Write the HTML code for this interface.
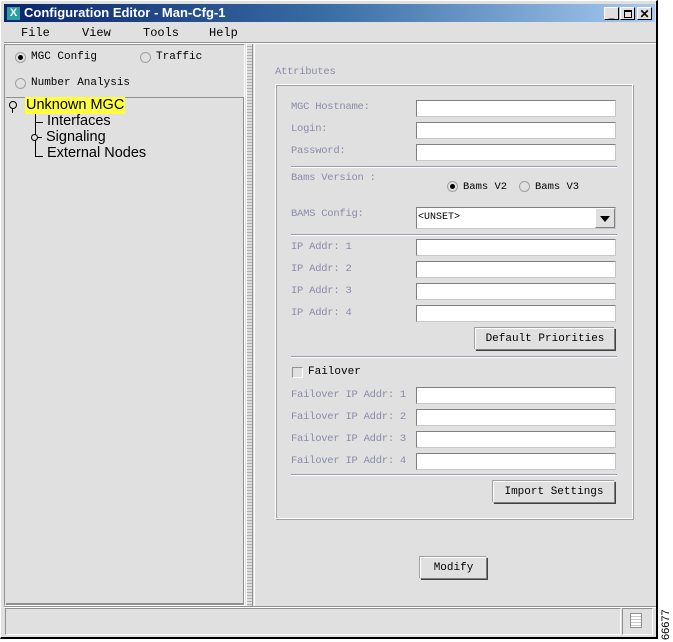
<!DOCTYPE html>
<html><head><style>
*{margin:0;padding:0;box-sizing:border-box}
body{width:673px;height:642px;background:#fff;position:relative;overflow:hidden;font-family:"Liberation Mono",monospace;font-size:10px}
.a{position:absolute}
.win{left:0;top:0;width:658px;height:639px;background:#e0e0e0;border-right:2px solid #000;border-bottom:2px solid #000;border-left:1px solid #fff;border-top:1px solid #fff}
.title{left:4px;top:4px;width:651px;height:18px;background:linear-gradient(90deg,#0a246a,#3a6ea5 50%,#a6caf0)}
.lbl{color:#8a8ca8;font-size:10.5px;white-space:nowrap;letter-spacing:-0.25px}
.inp{background:#fff;border-top:1px solid #808080;border-left:1px solid #808080;border-right:1px solid #c8c8c8;border-bottom:1px solid #c8c8c8;height:17px;width:200px;left:416px}
.sep{height:2px;border-top:1px solid #9a9ab0;border-bottom:1px solid #fff;left:291px;width:326px}
.btn{background:#e0e0e0;border-top:1px solid #fff;border-left:1px solid #fff;border-right:1px solid #808080;border-bottom:1px solid #808080;box-shadow:1px 1px 0 #404040,-1px -1px 0 #a0a0a0;text-align:center;color:#000;font-size:11px}
.rad{width:11px;height:11px;border-radius:50%;border:1px solid #a0a0a0;background:#e0e0e0}
.rad.on::after{content:"";position:absolute;left:2px;top:2px;width:5px;height:5px;border-radius:50%;background:#000}
.tree{font-family:"Liberation Sans","DejaVu Sans",sans-serif;font-size:14.5px;color:#000}
</style></head><body>
<div class="a win"></div>
<div class="a title"></div>
<div class="a" style="left:7px;top:7px;width:13px;height:13px;background:#2aa0a0;color:#fff;font:bold 11px 'Liberation Sans',sans-serif;text-align:center;line-height:13px">X</div>
<div class="a" style="left:24px;top:5px;color:#fff;font:bold 13px 'Liberation Sans',sans-serif">Configuration Editor - Man-Cfg-1</div>
<div class="a btn" style="left:604px;top:7px;width:15px;height:13px;font:bold 10px sans-serif;line-height:13px;box-shadow:none;border-right-color:#000;border-bottom-color:#000">_</div>
<div class="a btn" style="left:620px;top:7px;width:15px;height:13px;box-shadow:none;border-right-color:#000;border-bottom-color:#000"><div class="a" style="left:3px;top:2px;width:8px;height:8px;border:1px solid #000;border-top-width:2px"></div></div>
<div class="a btn" style="left:637px;top:7px;width:15px;height:13px;font:bold 12px sans-serif;line-height:12px;box-shadow:none;border-right-color:#000;border-bottom-color:#000">✕</div>
<div class="a" style="top:26px;left:21px;font-size:12px">File</div>
<div class="a" style="top:26px;left:82px;font-size:12px">View</div>
<div class="a" style="top:26px;left:143px;font-size:12px">Tools</div>
<div class="a" style="top:26px;left:209px;font-size:12px">Help</div>
<div class="a" style="left:4px;top:42px;width:652px;height:2px;border-top:1px solid #909090;border-bottom:1px solid #fff"></div>
<div class="a" style="left:4px;top:44px;width:241px;height:562px;border:1px solid #909090;border-right-color:#fff;border-bottom-color:#fff"></div>
<div class="a rad on" style="left:15px;top:52px"></div><div class="a" style="left:31px;top:51px;font-size:11px">MGC Config</div>
<div class="a rad" style="left:140px;top:52px"></div><div class="a" style="left:156px;top:51px;font-size:11px">Traffic</div>
<div class="a rad" style="left:15px;top:78px"></div><div class="a" style="left:31px;top:77px;font-size:11px">Number Analysis</div>
<div class="a" style="left:6px;top:97px;width:238px;height:508px;border-top:1px solid #909090;border-bottom:2px solid #909090;border-right:1px solid #909090"></div>
<div class="a" style="left:9px;top:101px;width:8px;height:8px;border:1px solid #000;border-radius:50%"></div>
<div class="a" style="left:12px;top:109px;width:1px;height:4px;background:#000"></div>
<div class="a tree" style="left:25px;top:97px;background:#ffff40;line-height:17px;padding:0 1px">Unknown MGC</div>
<div class="a" style="left:35px;top:114px;width:1px;height:43px;background:#000"></div>
<div class="a" style="left:35px;top:122px;width:8px;height:1px;background:#000"></div>
<div class="a" style="left:35px;top:156px;width:8px;height:1px;background:#000"></div>
<div class="a" style="left:31px;top:134px;width:7px;height:7px;border:1px solid #000;border-radius:50%;background:#e0e0e0"></div>
<div class="a" style="left:38px;top:137px;width:4px;height:1px;background:#000"></div>
<div class="a tree" style="left:47px;top:113px">Interfaces</div>
<div class="a tree" style="left:46px;top:129px">Signaling</div>
<div class="a tree" style="left:47px;top:145px">External Nodes</div>
<div class="a" style="left:246px;top:44px;width:7px;height:562px;background:repeating-linear-gradient(#e0e0e0 0 2px,#b0b0b0 2px 3px);border-left:1px solid #fff;border-right:1px solid #909090"></div>
<div class="a" style="left:254px;top:44px;width:402px;height:562px;border-left:1px solid #fff"></div>
<div class="a lbl" style="left:275px;top:66px">Attributes</div>
<div class="a" style="left:275px;top:84px;width:358px;height:435px;border:1px solid #fff;box-shadow:inset 1px 1px 0 #a0a0a0,1px 1px 0 #a0a0a0"></div>
<div class="a lbl" style="left:291px;top:101px">MGC Hostname:</div><div class="a inp" style="top:100px"></div>
<div class="a lbl" style="left:291px;top:123px">Login:</div><div class="a inp" style="top:122px"></div>
<div class="a lbl" style="left:291px;top:145px">Password:</div><div class="a inp" style="top:144px"></div>
<div class="a sep" style="top:166px"></div>
<div class="a lbl" style="left:291px;top:172px">Bams Version :</div>
<div class="a rad on" style="left:447px;top:181px"></div><div class="a" style="left:463px;top:181px;font-size:10.5px">Bams V2</div>
<div class="a rad" style="left:519px;top:181px"></div><div class="a" style="left:535px;top:181px;font-size:10.5px">Bams V3</div>
<div class="a lbl" style="left:291px;top:208px">BAMS Config:</div>
<div class="a inp" style="top:207px;height:22px;padding:4px 1px;color:#000">&lt;UNSET&gt;</div>
<div class="a btn" style="left:595px;top:208px;width:20px;height:20px;box-shadow:none"><div class="a" style="left:4px;top:7px;border-left:5px solid transparent;border-right:5px solid transparent;border-top:6px solid #000"></div></div>
<div class="a sep" style="top:234px"></div>
<div class="a lbl" style="left:291px;top:241px">IP Addr: 1</div><div class="a inp" style="top:239px"></div>
<div class="a lbl" style="left:291px;top:263px">IP Addr: 2</div><div class="a inp" style="top:261px"></div>
<div class="a lbl" style="left:291px;top:285px">IP Addr: 3</div><div class="a inp" style="top:283px"></div>
<div class="a lbl" style="left:291px;top:307px">IP Addr: 4</div><div class="a inp" style="top:305px"></div>
<div class="a btn" style="left:475px;top:328px;width:140px;height:22px;line-height:20px">Default Priorities</div>
<div class="a sep" style="top:356px"></div>
<div class="a" style="left:292px;top:367px;width:11px;height:11px;border:1px solid #909090;border-right-color:#fff;border-bottom-color:#fff"></div>
<div class="a" style="left:308px;top:366px;font-size:11px">Failover</div>
<div class="a lbl" style="left:291px;top:389px">Failover IP Addr: 1</div><div class="a inp" style="top:387px"></div>
<div class="a lbl" style="left:291px;top:411px">Failover IP Addr: 2</div><div class="a inp" style="top:409px"></div>
<div class="a lbl" style="left:291px;top:433px">Failover IP Addr: 3</div><div class="a inp" style="top:431px"></div>
<div class="a lbl" style="left:291px;top:455px">Failover IP Addr: 4</div><div class="a inp" style="top:453px"></div>
<div class="a sep" style="top:474px"></div>
<div class="a btn" style="left:493px;top:481px;width:122px;height:22px;line-height:20px">Import Settings</div>
<div class="a btn" style="left:420px;top:557px;width:67px;height:22px;line-height:20px">Modify</div>
<div class="a" style="left:4px;top:606px;width:652px;height:2px;border-top:1px solid #909090;border-bottom:1px solid #fff"></div>
<div class="a" style="left:5px;top:608px;width:616px;height:27px;border:1px solid #909090;border-right-color:#fff;border-bottom-color:#fff"></div>
<div class="a" style="left:622px;top:608px;width:31px;height:27px;border:1px solid #909090;border-right-color:#fff;border-bottom-color:#fff"></div>
<div class="a" style="left:630px;top:613px;width:12px;height:15px;background:#fff;border:1px solid #909090;background-image:repeating-linear-gradient(#fff 0 2px,#c8c8c8 2px 3px)"></div>
<div class="a" style="left:660px;top:640px;transform:rotate(-90deg);transform-origin:0 0;font:11px 'Liberation Sans',sans-serif;color:#000">66677</div>
</body></html>
